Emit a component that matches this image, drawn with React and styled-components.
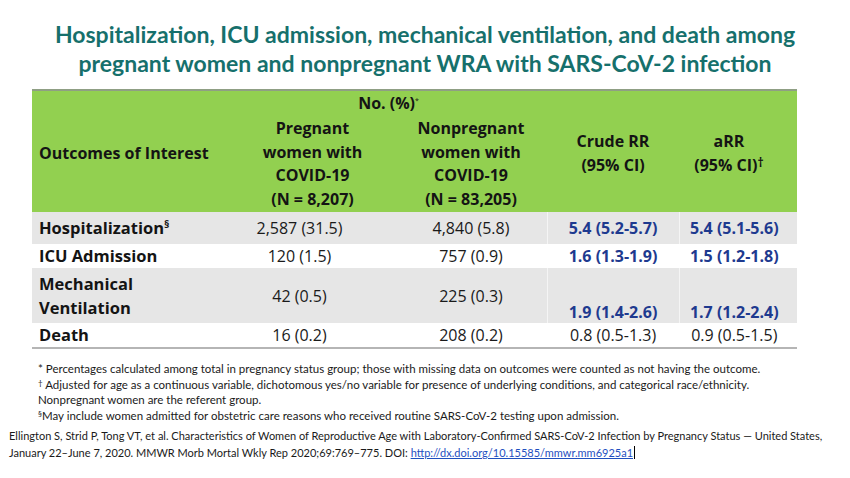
import styled, { createGlobalStyle } from "styled-components";

const GlobalStyle = createGlobalStyle`
  body {
    margin: 0;
    background: #fff;
  }
`;

const Page = styled.div`
  width: 850px;
  height: 478px;
  overflow: hidden;
  background: #fff;
  padding-top: 20px;
  box-sizing: border-box;
`;

const Title = styled.h1`
  margin: 0;
  font-family: "Lato", "Open Sans", sans-serif;
  font-weight: 700;
  font-size: 23px;
  line-height: 29px;
  color: #16706c;
  text-align: center;
`;

const Table = styled.table`
  margin: 11px 0 0 32px;
  width: 765px;
  border-collapse: collapse;
  table-layout: fixed;
  font-family: "Open Sans", sans-serif;
  font-size: 16px;
  color: #1a1a1a;
  border-top: 2px solid #8f9f84;
  border-bottom: 2px solid #b5b5b5;
`;

const HeadRow = styled.tr`
  background: #92d050;
`;

const Th = styled.th`
  font-weight: 700;
  font-size: 16px;
  line-height: 23.5px;
  color: #141414;
  text-align: ${(p) => p.$align || "center"};
  padding: ${(p) => p.$pad || "0"};
  height: ${(p) => p.$h || "auto"};
  vertical-align: ${(p) => p.$valign || "middle"};
`;

const Row = styled.tr`
  background: ${(p) => (p.$shade ? "#e6e6e6" : "#fff")};
  height: ${(p) => p.$h}px;
`;

const Label = styled.td`
  font-weight: 700;
  font-size: 16.5px;
  line-height: 24px;
  padding: 0 0 0 7px;
  color: #141414;
`;

const Td = styled.td`
  text-align: center;
  line-height: 22px;
  padding: 0 ${(p) => p.$padR || 4}px 0 4px;
  vertical-align: ${(p) => p.$valign || "middle"};
  font-weight: ${(p) => (p.$strong ? 700 : 400)};
  color: ${(p) => (p.$strong ? "#1e3a8f" : "#1a1a1a")};
  border-left: 1px solid ${(p) => (p.$strong ? "rgba(255,255,255,0.6)" : "transparent")};
`;

const Sup = styled.sup`
  font-size: ${(p) => p.$size || "9px"};
  line-height: 0;
  vertical-align: ${(p) => p.$raise || "6px"};
  font-weight: ${(p) => p.$weight || 700};
`;

const Notes = styled.div`
  margin-top: 12px;
  padding-left: 38px;
  font-family: "Lato", sans-serif;
  font-size: 11.5px;
  line-height: 15.5px;
  color: #1a1a1a;
`;

const Note = styled.div``;

const Citation = styled.div`
  margin-top: 4px;
  padding-left: 9px;
  width: 820px;
  font-family: "Lato", sans-serif;
  font-size: 11px;
  line-height: 17px;
  color: #1a1a1a;
`;

const Link = styled.a`
  color: #1f4fbf;
  text-decoration: underline;
`;

const Caret = styled.span`
  display: inline-block;
  width: 1px;
  height: 13px;
  background: #000;
  vertical-align: -2px;
  margin-left: 1px;
`;

const rows = [
  { label: "Hospitalization", mark: "§", a: "2,587 (31.5)", b: "4,840 (5.8)", c: "5.4 (5.2-5.7)", d: "5.4 (5.1-5.6)", strong: true, shade: true, h: 32 },
  { label: "ICU Admission", a: "120 (1.5)", b: "757 (0.9)", c: "1.6 (1.3-1.9)", d: "1.5 (1.2-1.8)", strong: true, h: 23 },
  { label: ["Mechanical", "Ventilation"], a: "42 (0.5)", b: "225 (0.3)", c: "1.9 (1.4-2.6)", d: "1.7 (1.2-2.4)", strong: true, shade: true, h: 55, bottom: true },
  { label: "Death", a: "16 (0.2)", b: "208 (0.2)", c: "0.8 (0.5-1.3)", d: "0.9 (0.5-1.5)", h: 22 },
];

const App = () => {
  return (
    <Page>
      <GlobalStyle />
      <Title>
        Hospitalization, ICU admission, mechanical ventilation, and death among
        <br />
        pregnant women and nonpregnant WRA with SARS-CoV-2 infection
      </Title>
      <Table>
        <colgroup>
          <col style={{ width: 198 }} />
          <col style={{ width: 165 }} />
          <col style={{ width: 152 }} />
          <col style={{ width: 132 }} />
          <col style={{ width: 118 }} />
        </colgroup>
        <thead>
          <HeadRow>
            <Th rowSpan={2} $align="left" $pad="4px 0 0 7px">
              Outcomes of Interest
            </Th>
            <Th colSpan={2} $h="25px">
              No. (%)<Sup $size="7px" $weight={400}>*</Sup>
            </Th>
            <Th rowSpan={2} $pad="4px 0 0 0">
              Crude RR
              <br />
              (95% CI)
            </Th>
            <Th rowSpan={2} $pad="4px 18px 0 0">
              aRR
              <br />
              (95% CI)<Sup $size="12px" $raise="4px">†</Sup>
            </Th>
          </HeadRow>
          <HeadRow>
            <Th $h="96px">
              Pregnant
              <br />
              women with
              <br />
              COVID-19
              <br />
              (N = 8,207)
            </Th>
            <Th $h="96px">
              Nonpregnant
              <br />
              women with
              <br />
              COVID-19
              <br />
              (N = 83,205)
            </Th>
          </HeadRow>
        </thead>
        <tbody>
          {rows.map((r, i) => (
            <Row key={i} $shade={r.shade} $h={r.h}>
              <Label>
                {Array.isArray(r.label) ? (
                  <>
                    {r.label[0]}
                    <br />
                    {r.label[1]}
                  </>
                ) : (
                  r.label
                )}
                {r.mark && <Sup $size="11px">{r.mark}</Sup>}
              </Label>
              <Td $padR={30}>{r.a}</Td>
              <Td>{r.b}</Td>
              <Td $strong={r.strong} $valign={r.bottom ? "bottom" : "middle"}>
                {r.c}
              </Td>
              <Td $strong={r.strong} $padR={12} $valign={r.bottom ? "bottom" : "middle"}>
                {r.d}
              </Td>
            </Row>
          ))}
        </tbody>
      </Table>
      <Notes>
        <Note>
          * Percentages calculated among total in pregnancy status group; those with missing data on outcomes were counted as not having the outcome.
        </Note>
        <Note>
          <Sup $size="8px" $raise="3px" $weight={400}>†</Sup> Adjusted for age as a continuous variable, dichotomous yes/no variable for presence of underlying conditions, and categorical race/ethnicity.
        </Note>
        <Note>Nonpregnant women are the referent group.</Note>
        <Note>
          <Sup $size="8px" $raise="3px" $weight={400}>§</Sup>May include women admitted for obstetric care reasons who received routine SARS-CoV-2 testing upon admission.
        </Note>
      </Notes>
      <Citation>
        Ellington S, Strid P, Tong VT, et al. Characteristics of Women of Reproductive Age with Laboratory-Confirmed SARS-CoV-2 Infection by Pregnancy Status — United States, January 22–June 7, 2020. MMWR Morb Mortal Wkly Rep 2020;69:769–775. DOI:{" "}
        <Link href="#">http://dx.doi.org/10.15585/mmwr.mm6925a1</Link>
        <Caret />
      </Citation>
    </Page>
  );
};

export default App;
